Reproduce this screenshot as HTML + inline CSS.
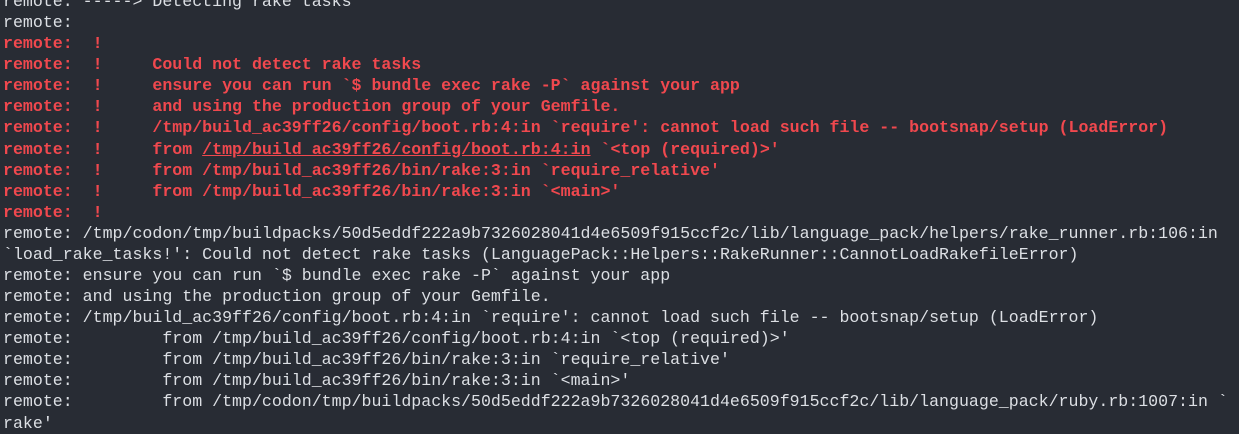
<html><head><style>
body{margin:0;background:#282c34;width:1239px;height:426px;overflow:hidden}
pre{position:absolute;left:3px;top:-9px;margin:0;font-family:"Liberation Mono",monospace;font-size:16.6px;line-height:21.08px;color:#dcdfe4}
.r{color:#f0484e;font-weight:bold}
</style></head><body><pre>remote: -----&gt; Detecting rake tasks
remote:
<span class="r">remote:  !
remote:  !     Could not detect rake tasks
remote:  !     ensure you can run `$ bundle exec rake -P` against your app
remote:  !     and using the production group of your Gemfile.
remote:  !     /tmp/build_ac39ff26/config/boot.rb:4:in `require': cannot load such file -- bootsnap/setup (LoadError)
remote:  !     from <u>/tmp/build_ac39ff26/config/boot.rb:4:in</u> `&lt;top (required)&gt;'
remote:  !     from /tmp/build_ac39ff26/bin/rake:3:in `require_relative'
remote:  !     from /tmp/build_ac39ff26/bin/rake:3:in `&lt;main&gt;'
remote:  !</span>
remote: /tmp/codon/tmp/buildpacks/50d5eddf222a9b7326028041d4e6509f915ccf2c/lib/language_pack/helpers/rake_runner.rb:106:in
`load_rake_tasks!': Could not detect rake tasks (LanguagePack::Helpers::RakeRunner::CannotLoadRakefileError)
remote: ensure you can run `$ bundle exec rake -P` against your app
remote: and using the production group of your Gemfile.
remote: /tmp/build_ac39ff26/config/boot.rb:4:in `require': cannot load such file -- bootsnap/setup (LoadError)
remote:         from /tmp/build_ac39ff26/config/boot.rb:4:in `&lt;top (required)&gt;'
remote:         from /tmp/build_ac39ff26/bin/rake:3:in `require_relative'
remote:         from /tmp/build_ac39ff26/bin/rake:3:in `&lt;main&gt;'
remote:         from /tmp/codon/tmp/buildpacks/50d5eddf222a9b7326028041d4e6509f915ccf2c/lib/language_pack/ruby.rb:1007:in `
rake'
</pre></body></html>
